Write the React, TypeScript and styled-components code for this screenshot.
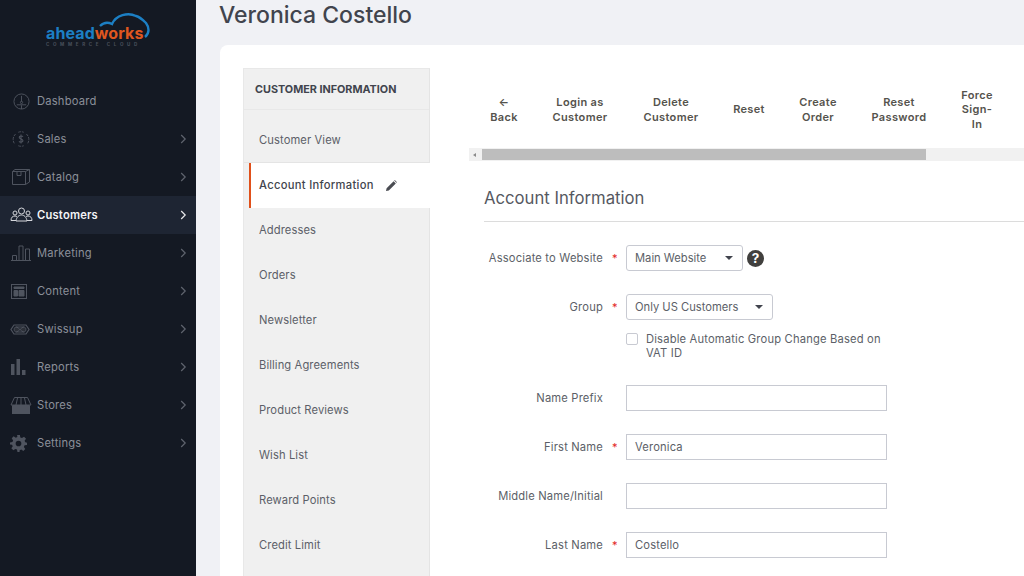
import React from "react"
import styled, { createGlobalStyle } from "styled-components"

const GlobalStyle = createGlobalStyle`
  html, body {
    margin: 0;
    padding: 0;
    background: #f0f1f5;
  }
  * {
    box-sizing: border-box;
  }
  body {
    font-family: Inter, "Open Sans", "Liberation Sans", sans-serif;
  }
`

const Page = styled.div`
  display: flex;
  width: 1024px;
  height: 576px;
  overflow: hidden;
`

const Sidebar = styled.aside`
  flex: 0 0 196px;
  background: #141923;
  display: flex;
  flex-direction: column;
`

const LogoBox = styled.div`
  height: 82px;
  padding: 12px 0 0 46px;
  position: relative;
`

const LogoCloud = styled.svg`
  position: absolute;
  left: 46px;
  top: 11px;
`

const LogoText = styled.div`
  position: relative;
  margin-top: 13px;
  font-size: 16px;
  line-height: 16px;
  font-weight: 700;
  letter-spacing: 0.1px;
  color: #1c7fc4;

  span {
    color: #e0571f;
  }
`

const LogoSub = styled.div`
  font-size: 4.5px;
  line-height: 6px;
  margin-top: 1px;
  letter-spacing: 3.65px;
  color: #4a505c;
  white-space: nowrap;
`

const NavRow = styled.div<{ $active?: boolean }>`
  height: 38px;
  display: flex;
  align-items: center;
  padding: 0 9px;
  background: ${(p) => (p.$active ? "#1e2533" : "transparent")};
  color: ${(p) => (p.$active ? "#f4f5f7" : "#8b8f99")};
`

const NavIcon = styled.div<{ $left: number }>`
  width: 28px;
  display: flex;
  padding-left: ${(p) => p.$left}px;
`

const NavLabel = styled.span<{ $active?: boolean }>`
  flex: 1;
  font-size: 11.2px;
  letter-spacing: 0.2px;
  font-weight: ${(p) => (p.$active ? 600 : 400)};
`

const Main = styled.main`
  flex: 1;
  padding: 0 0 0 24px;
  display: flex;
  flex-direction: column;
  min-width: 0;
`

const PageTitle = styled.h1`
  margin: 0 0 0 -1px;
  height: 45px;
  padding-top: 2px;
  font-size: 23px;
  line-height: 27px;
  font-weight: 500;
  color: #41444d;
`

const Card = styled.div`
  flex: 1;
  background: #fff;
  border-radius: 8px 0 0 0;
  padding: 23px 0 0 23px;
  display: flex;
  min-height: 0;
`

const Tabs = styled.nav`
  flex: 0 0 187px;
  background: #f0f0f0;
  border: 1px solid #e8e8e8;
  border-bottom: 0;
  border-right-color: #e4e4e4;
`

const TabsHeader = styled.div`
  height: 41px;
  padding-left: 11px;
  display: flex;
  align-items: center;
  font-size: 10.8px;
  font-weight: 700;
  color: #41444d;
  border-bottom: 1px solid #e8e8e8;
`

const TabItem = styled.div<{ $active?: boolean; $first?: boolean }>`
  height: ${(p) => (p.$first ? "53px" : "44.95px")};
  padding: ${(p) => (p.$first ? "8px" : "0")} 0 0 ${(p) => (p.$active ? "8px" : "15px")};
  display: flex;
  align-items: center;
  gap: 12px;
  font-size: 11.2px;
  letter-spacing: 0.1px;
  color: #5c5f68;
  ${(p) =>
    p.$active &&
    `
    background: #fff;
    color: #41444d;
    font-weight: 500;
    letter-spacing: 0.3px;
    border-left: 2px solid #e0501a;
    margin-left: 5px;
    margin-right: -1px;
  `}
  ${(p) => p.$first && "border-bottom: 1px solid #e4e4e4;"}
`

const Content = styled.section`
  flex: 1;
  min-width: 0;
  padding: 3px 0 0 39px;
`

const ActionBar = styled.div`
  display: flex;
  height: 77px;
  align-items: center;
  justify-content: flex-start;
`

const ActionButton = styled.div<{ $w: number }>`
  width: ${(p) => p.$w}px;
  flex: none;
  text-align: center;
  font-size: 11px;
  line-height: 14.5px;
  font-weight: 600;
  color: #55534d;
  letter-spacing: 0.35px;
`

const ScrollTrack = styled.div`
  height: 13px;
  background: #f1f1f1;
  display: flex;
  align-items: center;
  padding-left: 4px;
`

const ScrollArrow = styled.div`
  width: 0;
  height: 0;
  border-style: solid;
  border-width: 2.5px 3px 2.5px 0;
  border-color: transparent #8a8a8a transparent transparent;
  margin-right: 6px;
`

const ScrollThumb = styled.div`
  width: 444px;
  height: 11px;
  background: #bdbdbd;
`

const Form = styled.div`
  padding-left: 15px;
`

const SectionTitle = styled.h2`
  margin: 0 0 23px;
  height: 61px;
  padding-top: 27px;
  font-size: 16.7px;
  line-height: 20px;
  font-weight: 400;
  color: #55585f;
  border-bottom: 1px solid #dcdcdc;
`

const FieldRow = styled.div<{ $gap?: number }>`
  display: grid;
  grid-template-columns: 119px 23px 1fr;
  align-items: center;
  min-height: 26px;
  margin-bottom: ${(p) => p.$gap ?? 23}px;
`

const FieldLabel = styled.label`
  text-align: right;
  font-size: 11.2px;
  letter-spacing: 0.17px;
  color: #5c5f68;
  white-space: nowrap;
`

const Star = styled.span`
  padding-left: 9px;
  font-size: 11px;
  color: #e22626;
`

const SelectBox = styled.div<{ $w: number }>`
  width: ${(p) => p.$w}px;
  height: 26px;
  border: 1px solid #c8cad2;
  border-radius: 3px;
  padding: 0 9px 0 8px;
  display: flex;
  align-items: center;
  justify-content: space-between;
  font-size: 11.2px;
  letter-spacing: 0;
  color: #5c5f68;
`

const Caret = styled.span`
  width: 0;
  height: 0;
  border-style: solid;
  border-width: 4px 4px 0 4px;
  border-color: #41444d transparent transparent transparent;
`

const Control = styled.div`
  display: flex;
  align-items: center;
  gap: 4px;
`

const HelpBadge = styled.span`
  width: 17px;
  height: 17px;
  border-radius: 50%;
  background: #41403e;
  color: #fff;
  font-size: 13.5px;
  font-weight: 700;
  display: flex;
  align-items: center;
  justify-content: center;
`

const CheckRow = styled.div`
  display: flex;
  gap: 8px;
  margin: -11px 0 25px 142px;
  width: 262px;
`

const CheckBox = styled.span`
  flex: none;
  width: 12px;
  height: 12px;
  margin-top: 1px;
  border: 1px solid #c8cad2;
  border-radius: 2px;
`

const CheckText = styled.span`
  font-size: 11.2px;
  line-height: 14px;
  letter-spacing: 0.17px;
  color: #5c5f68;
`

const TextField = styled.div`
  width: 261px;
  height: 26px;
  border: 1px solid #c8cad2;
  padding: 0 8px;
  display: flex;
  align-items: center;
  font-size: 11.2px;
  letter-spacing: 0.15px;
  color: #5c5f68;
`

const iconProps = {
  fill: "none",
  stroke: "#4f545f",
  strokeWidth: 1,
}

const DashboardIcon = () => (
  <svg width="17" height="17" viewBox="0 0 18 18" {...iconProps}>
    <circle cx="9" cy="9" r="8" />
    <path d="M9 3v6M4 12.500h10M9 13v4" />
    <circle cx="9" cy="10" r="1.2" />
  </svg>
)

const SalesIcon = () => (
  <svg width="18" height="18" viewBox="0 0 20 18" {...iconProps}>
    <path d="M4 3.500A8 8 0 0 0 3 14.500M16 3.500a8 8 0 0 1 1 11M7 1.500a8 8 0 0 1 6 0M7 16.500a8 8 0 0 0 6 0" strokeDasharray="3 1" />
    <path d="M12.200 6.400C11.500 5.400 8 5 8 7c0 2.200 4.200 1.600 4.200 4 0 2-3.600 1.700-4.400.6M10 4v10" strokeWidth="1.200" />
  </svg>
)

const CatalogIcon = () => (
  <svg width="18" height="16" viewBox="0 0 18 16" {...iconProps}>
    <path d="M.5 2.500h13v13H.5zM.5 2.500L3 .5h14.500v12.500l-4 2.500M13.500 2.500L17.500 .5" />
    <path d="M5 2.500v4h4v-4" />
  </svg>
)

const CustomersIcon = () => (
  <svg width="23" height="16" viewBox="0 0 23 16" fill="none" stroke="#d5d7dc" strokeWidth="1">
    <circle cx="11.500" cy="4" r="3" />
    <circle cx="5" cy="6" r="2" />
    <circle cx="18" cy="6" r="2" />
    <path d="M6 14c.5-4 3-6 5.500-6s5 2 5.500 6z" />
    <path d="M1 13.500c0-3 1.500-4.500 4-4.500 .8 0 1.400.2 2 .6M22 13.500c0-3-1.500-4.500-4-4.500-.8 0-1.400.2-2 .6M1 13.500h5M17 13.500h5" />
  </svg>
)

const MarketingIcon = () => (
  <svg width="20" height="16" viewBox="0 0 20 16" {...iconProps}>
    <path d="M0 15.500h20M1.500 15.500v-5h4v5M8 15.500V1h4v14.500M14.500 15.500V4h4v11.500" />
  </svg>
)

const ContentIcon = () => (
  <svg width="16" height="15" viewBox="0 0 16 15" {...iconProps}>
    <rect x="0.500" y="0.500" width="15" height="14" />
    <path d="M3 3h10v1.500H3z" fill="#4f545f" />
    <path d="M3 6.500h3.500V12H3zM8 6.500h5V12H8z" fill="#4f545f" />
  </svg>
)

const SwissupIcon = () => (
  <svg width="20" height="11" viewBox="0 0 20 11" {...iconProps}>
    <path d="M4 1h12l3 4.500-3 4.500H4L1 5.500z" strokeWidth="1.200" />
    <path d="M6 3h8M6 8h8" />
    <path d="M6 3c-2.500 0-2.500 5 0 5 3 0 5-5 8-5 2.500 0 2.500 5 0 5-3 0-5-5-8-5z" fill="#2c3038" />
  </svg>
)

const ReportsIcon = () => (
  <svg width="15" height="16" viewBox="0 0 15 16" fill="#4f545f">
    <rect x="0" y="5" width="3.500" height="11" />
    <rect x="5.500" y="0" width="3.500" height="16" />
    <rect x="11" y="11" width="3.500" height="5" />
  </svg>
)

const StoresIcon = () => (
  <svg width="22" height="17" viewBox="0 0 22 17" {...iconProps}>
    <path d="M4.500.5h13L21 8H1zM7.500 1L6 8M11 1v7M14.500 1L16 8" />
    <path d="M2.500 8.500h17V17h-17z" fill="#4f545f" />
  </svg>
)

const SettingsIcon = () => (
  <svg width="17" height="17" viewBox="0 0 24 24" fill="#4f545f">
    <path
      fillRule="evenodd"
      d="M10 0h4l.6 3.400 2.300 1 2.900-2 2.800 2.800-2 2.900 1 2.300L24 11v3l-3.400.6-1 2.300 2 2.900-2.800 2.800-2.900-2-2.300 1L13.500 24h-3l-.6-3.400-2.300-1-2.900 2-2.800-2.800 2-2.900-1-2.300L0 13.500v-3l3.400-.6 1-2.300-2-2.900L5.200 1.900l2.900 2 2.300-1zM12 8a4 4 0 1 0 0 8 4 4 0 0 0 0-8z"
    />
  </svg>
)

const Chevron = ({ color }: { color: string }) => (
  <svg width="7" height="10" viewBox="0 0 7 10" fill="none" stroke={color} strokeWidth="1.200">
    <path d="M1.200 1l4 4-4 4" />
  </svg>
)

const PencilIcon = () => (
  <svg width="11" height="11" viewBox="0 0 11 11" fill="#4a4c52">
    <path d="M0 11l.6-2.800L7.600 1.200l2.200 2.200-7 7zM8.200.6l.6-.6 2.200 2.200-.6.6z" />
  </svg>
)

const navItems = [
  { label: "Dashboard", icon: <DashboardIcon />, left: 4, arrow: false },
  { label: "Sales", icon: <SalesIcon />, left: 3, arrow: true },
  { label: "Catalog", icon: <CatalogIcon />, left: 3, arrow: true },
  { label: "Customers", icon: <CustomersIcon />, left: 1, arrow: true, active: true },
  { label: "Marketing", icon: <MarketingIcon />, left: 2, arrow: true },
  { label: "Content", icon: <ContentIcon />, left: 2, arrow: true },
  { label: "Swissup", icon: <SwissupIcon />, left: 1, arrow: true },
  { label: "Reports", icon: <ReportsIcon />, left: 2, arrow: true },
  { label: "Stores", icon: <StoresIcon />, left: 1, arrow: true },
  { label: "Settings", icon: <SettingsIcon />, left: 1, arrow: true },
]

const tabItems = [
  "Addresses",
  "Orders",
  "Newsletter",
  "Billing Agreements",
  "Product Reviews",
  "Wish List",
  "Reward Points",
  "Credit Limit",
]

const actions = [
  { w: 70, text: ["←", "Back"] },
  { w: 82, text: ["Login as", "Customer"] },
  { w: 100, text: ["Delete", "Customer"] },
  { w: 56, text: ["Reset"] },
  { w: 82, text: ["Create", "Order"] },
  { w: 80, text: ["Reset", "Password"] },
  { w: 76, text: ["Force", "Sign-", "In"] },
]

const App = () => {
  return (
    <Page>
      <GlobalStyle />
      <Sidebar>
        <LogoBox>
          <LogoCloud width="106" height="30" viewBox="0 0 106 30" fill="none" stroke="#1c7fc4" strokeWidth="2.400">
            <path d="M54 15C58 11 62 11 66 13C70 4 82 1 90 5C94 6 97 9 100 12C103 16 104 22 99 26" />
          </LogoCloud>
          <LogoText>
            ahead<span>works</span>
            <LogoSub>COMMERCE CLOUD</LogoSub>
          </LogoText>
        </LogoBox>
        {navItems.map((item) => (
          <NavRow key={item.label} $active={item.active}>
            <NavIcon $left={item.left}>{item.icon}</NavIcon>
            <NavLabel $active={item.active}>{item.label}</NavLabel>
            {item.arrow && <Chevron color={item.active ? "#e8e9ec" : "#5f646e"} />}
          </NavRow>
        ))}
      </Sidebar>
      <Main>
        <PageTitle>Veronica Costello</PageTitle>
        <Card>
          <Tabs>
            <TabsHeader>CUSTOMER INFORMATION</TabsHeader>
            <TabItem $first>Customer View</TabItem>
            <TabItem $active>
              Account Information
              <PencilIcon />
            </TabItem>
            {tabItems.map((t) => (
              <TabItem key={t}>{t}</TabItem>
            ))}
          </Tabs>
          <Content>
            <ActionBar>
              {actions.map((a) => (
                <ActionButton key={a.text.join()} $w={a.w}>
                  {a.text.map((line) => (
                    <div key={line}>{line}</div>
                  ))}
                </ActionButton>
              ))}
            </ActionBar>
            <ScrollTrack>
              <ScrollArrow />
              <ScrollThumb />
            </ScrollTrack>
            <Form>
              <SectionTitle>Account Information</SectionTitle>
              <FieldRow>
                <FieldLabel>Associate to Website</FieldLabel>
                <Star>*</Star>
                <Control>
                  <SelectBox $w={117}>
                    Main Website
                    <Caret />
                  </SelectBox>
                  <HelpBadge>?</HelpBadge>
                </Control>
              </FieldRow>
              <FieldRow>
                <FieldLabel>Group</FieldLabel>
                <Star>*</Star>
                <SelectBox $w={147}>
                  Only US Customers
                  <Caret />
                </SelectBox>
              </FieldRow>
              <CheckRow>
                <CheckBox />
                <CheckText>Disable Automatic Group Change Based on VAT ID</CheckText>
              </CheckRow>
              <FieldRow>
                <FieldLabel>Name Prefix</FieldLabel>
                <span />
                <TextField />
              </FieldRow>
              <FieldRow>
                <FieldLabel>First Name</FieldLabel>
                <Star>*</Star>
                <TextField>Veronica</TextField>
              </FieldRow>
              <FieldRow>
                <FieldLabel>Middle Name/Initial</FieldLabel>
                <span />
                <TextField />
              </FieldRow>
              <FieldRow>
                <FieldLabel>Last Name</FieldLabel>
                <Star>*</Star>
                <TextField>Costello</TextField>
              </FieldRow>
            </Form>
          </Content>
        </Card>
      </Main>
    </Page>
  )
}

export default App
